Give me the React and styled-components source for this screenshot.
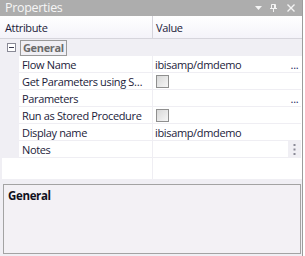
import React from "react";
import styled, { createGlobalStyle } from "styled-components";

const Global = createGlobalStyle`
  html, body { margin: 0; padding: 0; background: #ffffff; }
  body { font-family: "Open Sans", "Noto Sans", sans-serif; font-size: 11px; letter-spacing: -0.35px; }
`;

const Panel = styled.div`
  width: 302px;
  height: 256px;
  background: #f0eff4;
  border-right: 1px solid #9c9c9c;
  display: flex;
  flex-direction: column;
`;

const TitleBar = styled.div`
  flex: 0 0 16px;
  background: #adadad;
  display: flex;
  align-items: center;
  padding: 0 7px 0 5px;
  color: #f6f6f6;
  font-size: 12.5px;
  letter-spacing: -0.3px;
`;

const Title = styled.span`
  flex: 1;
  line-height: 16px;
`;

const TitleIcon = styled.svg`
  display: block;
  margin-left: ${(p) => p.$gap}px;
`;

const Grid = styled.div`
  flex: 0 0 163px;
  display: flex;
  flex-direction: column;
  background: #ffffff;
`;

const HeaderRow = styled.div`
  height: 23px;
  box-sizing: border-box;
  display: grid;
  grid-template-columns: 153px 1fr;
  background: linear-gradient(#ffffff, #f4f3f9);
  border-bottom: 1px solid #d6d5dc;
`;

const HeaderCell = styled.div`
  display: flex;
  align-items: center;
  padding-left: ${(p) => p.$pad}px;
  color: #1b1b3a;
  border-right: ${(p) => (p.$divider ? "1px solid #d6d5dc" : "none")};
`;

const CategoryRow = styled.div`
  height: 17px;
  display: flex;
  align-items: center;
  background: #f0eff4;
`;

const Expander = styled.div`
  width: 7px;
  height: 7px;
  border: 1px solid #8a8a96;
  background: #ffffff;
  margin: 0 4px 0 7px;
  position: relative;
  &::after {
    content: "";
    position: absolute;
    left: 1px;
    right: 1px;
    top: 3px;
    height: 1px;
    background: #3a3a50;
  }
`;

const CategoryLabel = styled.div`
  font-weight: 700;
  color: #6b6b6b;
  border: 1px solid #9a9a9a;
  padding: 0 2px;
  line-height: 14px;
`;

const Row = styled.div`
  height: 17px;
  display: grid;
  grid-template-columns: 19px 134px 135px 13px;
`;

const Margin = styled.div`
  background: #f0eff4;
`;

const NameCell = styled.div`
  display: flex;
  align-items: center;
  padding-left: 3px;
  color: #1b1b3a;
  white-space: nowrap;
  overflow: hidden;
  border-right: 1px solid #efeef3;
  border-bottom: 1px solid #efeef3;
  min-width: 0;
`;

const Ellipsis = styled.span`
  overflow: hidden;
  text-overflow: ellipsis;
  white-space: nowrap;
  padding-right: 8px;
`;

const ValueCell = styled.div`
  display: flex;
  align-items: center;
  padding-left: 2px;
  color: #1b1b3a;
  border-bottom: 1px solid #efeef3;
`;

const Button = styled.div`
  display: flex;
  align-items: center;
  justify-content: center;
  color: #1b1b5a;
  background: ${(p) => (p.$shade ? "#f0eff4" : "transparent")};
  border-bottom: 1px solid #efeef3;
  font-size: 11px;
  letter-spacing: -0.3px;
`;

const Check = styled.div`
  width: 11px;
  height: 11px;
  margin-left: 1px;
  border: 1px solid #8f8f8f;
  background: linear-gradient(135deg, #d8d8d8, #f6f6f6);
`;

const Filler = styled.div`
  flex: 1;
  display: grid;
  grid-template-columns: 153px 1fr;
`;

const FillerCol = styled.div`
  border-right: ${(p) => (p.$divider ? "1px solid #efeef3" : "none")};
  background: ${(p) => (p.$shade ? "linear-gradient(90deg, #f0eff4 2px, #ffffff 2px)" : "#ffffff")};
`;

const Splitter = styled.div`
  flex: 0 0 5px;
`;

const DescBox = styled.div`
  flex: 0 0 70px;
  box-sizing: border-box;
  margin: 0 1px 0 3px;
  border: 1px solid #a3a3a3;
  background: #f3f1f5;
  padding: 3px 4px;
`;

const DescTitle = styled.div`
  font-weight: 700;
  color: #101020;
  font-size: 11.5px;
`;

const DotsV = () => (
  <svg width="3" height="11" viewBox="0 0 3 11">
    <rect x="0.5" y="0" width="2" height="2" fill="#8a8a96" />
    <rect x="0.5" y="4.5" width="2" height="2" fill="#8a8a96" />
    <rect x="0.5" y="9" width="2" height="2" fill="#8a8a96" />
  </svg>
);

const rows = [
  { name: "Flow Name", value: "ibisamp/dmdemo", btn: "dots" },
  { name: "Get Parameters using Stored Procedure", check: true },
  { name: "Parameters", btn: "dots" },
  { name: "Run as Stored Procedure", check: true },
  { name: "Display name", value: "ibisamp/dmdemo" },
  { name: "Notes", btn: "vdots" },
];

export default function App() {
  return (
    <>
      <Global />
      <Panel>
        <TitleBar>
          <Title>Properties</Title>
          <TitleIcon width="7" height="4" viewBox="0 0 7 4" $gap={0}>
            <path d="M0 0h7L3.5 4z" fill="#f4f4f4" />
          </TitleIcon>
          <TitleIcon width="7" height="8" viewBox="0 0 7 8" $gap={8}>
            <path d="M1.5 0.5h4v4h-4zM0 4.5h7M3.5 4.5v3.5M4.5 0.5v4" stroke="#f4f4f4" strokeWidth="1" fill="none" />
          </TitleIcon>
          <TitleIcon width="8" height="8" viewBox="0 0 8 8" $gap={10}>
            <path d="M0.5 0.5l7 7M7.5 0.5l-7 7" stroke="#f4f4f4" strokeWidth="1.4" fill="none" />
          </TitleIcon>
        </TitleBar>
        <Grid>
          <HeaderRow>
            <HeaderCell $pad={5} $divider>Attribute</HeaderCell>
            <HeaderCell $pad={3}>Value</HeaderCell>
          </HeaderRow>
          <CategoryRow>
            <Expander />
            <CategoryLabel>General</CategoryLabel>
          </CategoryRow>
          {rows.map((r) => (
            <Row key={r.name}>
              <Margin />
              <NameCell>
                <Ellipsis>{r.name}</Ellipsis>
              </NameCell>
              <ValueCell>{r.check ? <Check /> : r.value}</ValueCell>
              <Button $shade={r.btn === "vdots"}>
                {r.btn === "dots" ? "..." : r.btn === "vdots" ? <DotsV /> : null}
              </Button>
            </Row>
          ))}
          <Filler>
            <FillerCol $divider $shade />
            <FillerCol />
          </Filler>
        </Grid>
        <Splitter />
        <DescBox>
          <DescTitle>General</DescTitle>
        </DescBox>
      </Panel>
    </>
  );
}
